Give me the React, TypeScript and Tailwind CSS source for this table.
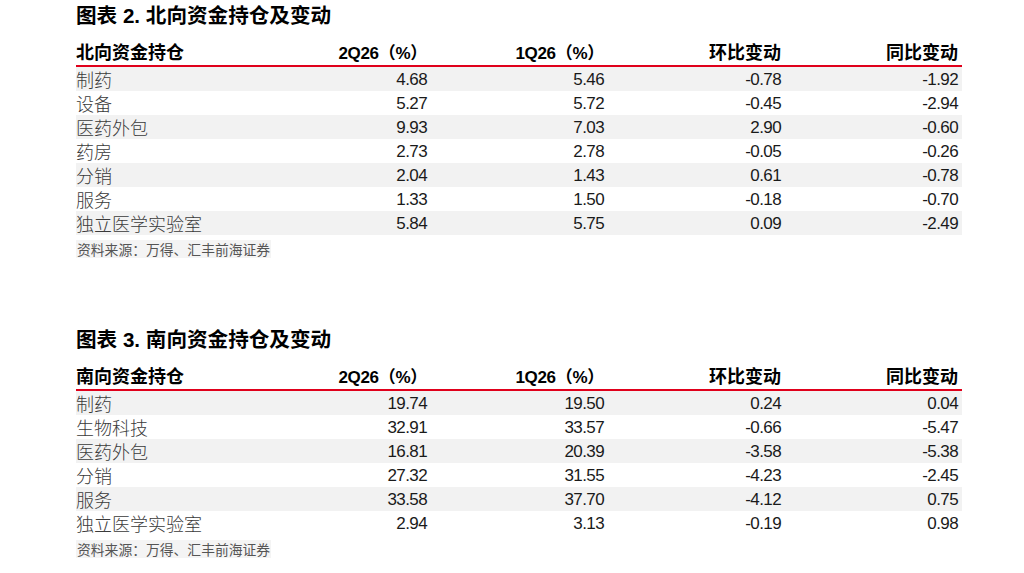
type Row = { name: string; values: string[] };

const northRows: Row[] = [
  { name: '制药', values: ['4.68', '5.46', '-0.78', '-1.92'] },
  { name: '设备', values: ['5.27', '5.72', '-0.45', '-2.94'] },
  { name: '医药外包', values: ['9.93', '7.03', '2.90', '-0.60'] },
  { name: '药房', values: ['2.73', '2.78', '-0.05', '-0.26'] },
  { name: '分销', values: ['2.04', '1.43', '0.61', '-0.78'] },
  { name: '服务', values: ['1.33', '1.50', '-0.18', '-0.70'] },
  { name: '独立医学实验室', values: ['5.84', '5.75', '0.09', '-2.49'] },
];

const southRows: Row[] = [
  { name: '制药', values: ['19.74', '19.50', '0.24', '0.04'] },
  { name: '生物科技', values: ['32.91', '33.57', '-0.66', '-5.47'] },
  { name: '医药外包', values: ['16.81', '20.39', '-3.58', '-5.38'] },
  { name: '分销', values: ['27.32', '31.55', '-4.23', '-2.45'] },
  { name: '服务', values: ['33.58', '37.70', '-4.12', '0.75'] },
  { name: '独立医学实验室', values: ['2.94', '3.13', '-0.19', '0.98'] },
];

const sans = "font-['Liberation_Sans','Noto_Sans_CJK_SC',sans-serif]";
const cols = 'grid grid-cols-[178px_177px_177px_177px_177px]';

function HoldingTable({ title, label, rows }: { title: string; label: string; rows: Row[] }) {
  return (
    <section className="flex flex-col">
      <h2 className={`${sans} h-[32px] flex items-center text-[20.6px] font-bold text-black`}>{title}</h2>
      <div className={`${cols} mt-[9px] h-[24px] items-center border-b-2 border-[#e0001b] box-content ${sans} font-bold text-black`}>
        <div className="text-[18px] leading-none">{label}</div>
        <div className="pr-1 text-right text-[17px] tracking-[-0.3px] leading-none">2Q26（%）</div>
        <div className="pr-1 text-right text-[17px] tracking-[-0.3px] leading-none">1Q26（%）</div>
        <div className="pr-1 text-right text-[18px] leading-none">环比变动</div>
        <div className="pr-1 text-right text-[18px] leading-none">同比变动</div>
      </div>
      {rows.map((r, i) => (
        <div key={r.name} className={`${cols} h-[24px] items-center ${i % 2 === 0 ? 'bg-[#f2f2f2]' : 'bg-white'}`}>
          <div className="font-['Noto_Sans_CJK_SC',sans-serif] text-[18px] leading-none text-[#3a3a3a] font-light">{r.name}</div>
          {r.values.map((v, j) => (
            <div key={j} className="pr-1 text-right font-['Liberation_Sans',sans-serif] text-[17px] tracking-[-0.6px] leading-none text-[#1a1a1a]">
              {v}
            </div>
          ))}
        </div>
      ))}
      <div className="h-[28px] flex items-center">
        <span className="bg-[#f4f4f4] px-[1px] font-['Noto_Sans_CJK_SC',sans-serif] text-[13.8px] leading-[18px] text-[#555]">
          资料来源：万得、汇丰前海证券
        </span>
      </div>
    </section>
  );
}

export default function App() {
  return (
    <div className="w-[1024px] h-[573px] bg-white pl-[76px] overflow-hidden">
      <div className="flex flex-col w-[886px] gap-[61px]">
        <HoldingTable title="图表 2. 北向资金持仓及变动" label="北向资金持仓" rows={northRows} />
        <HoldingTable title="图表 3. 南向资金持仓及变动" label="南向资金持仓" rows={southRows} />
      </div>
    </div>
  );
}
